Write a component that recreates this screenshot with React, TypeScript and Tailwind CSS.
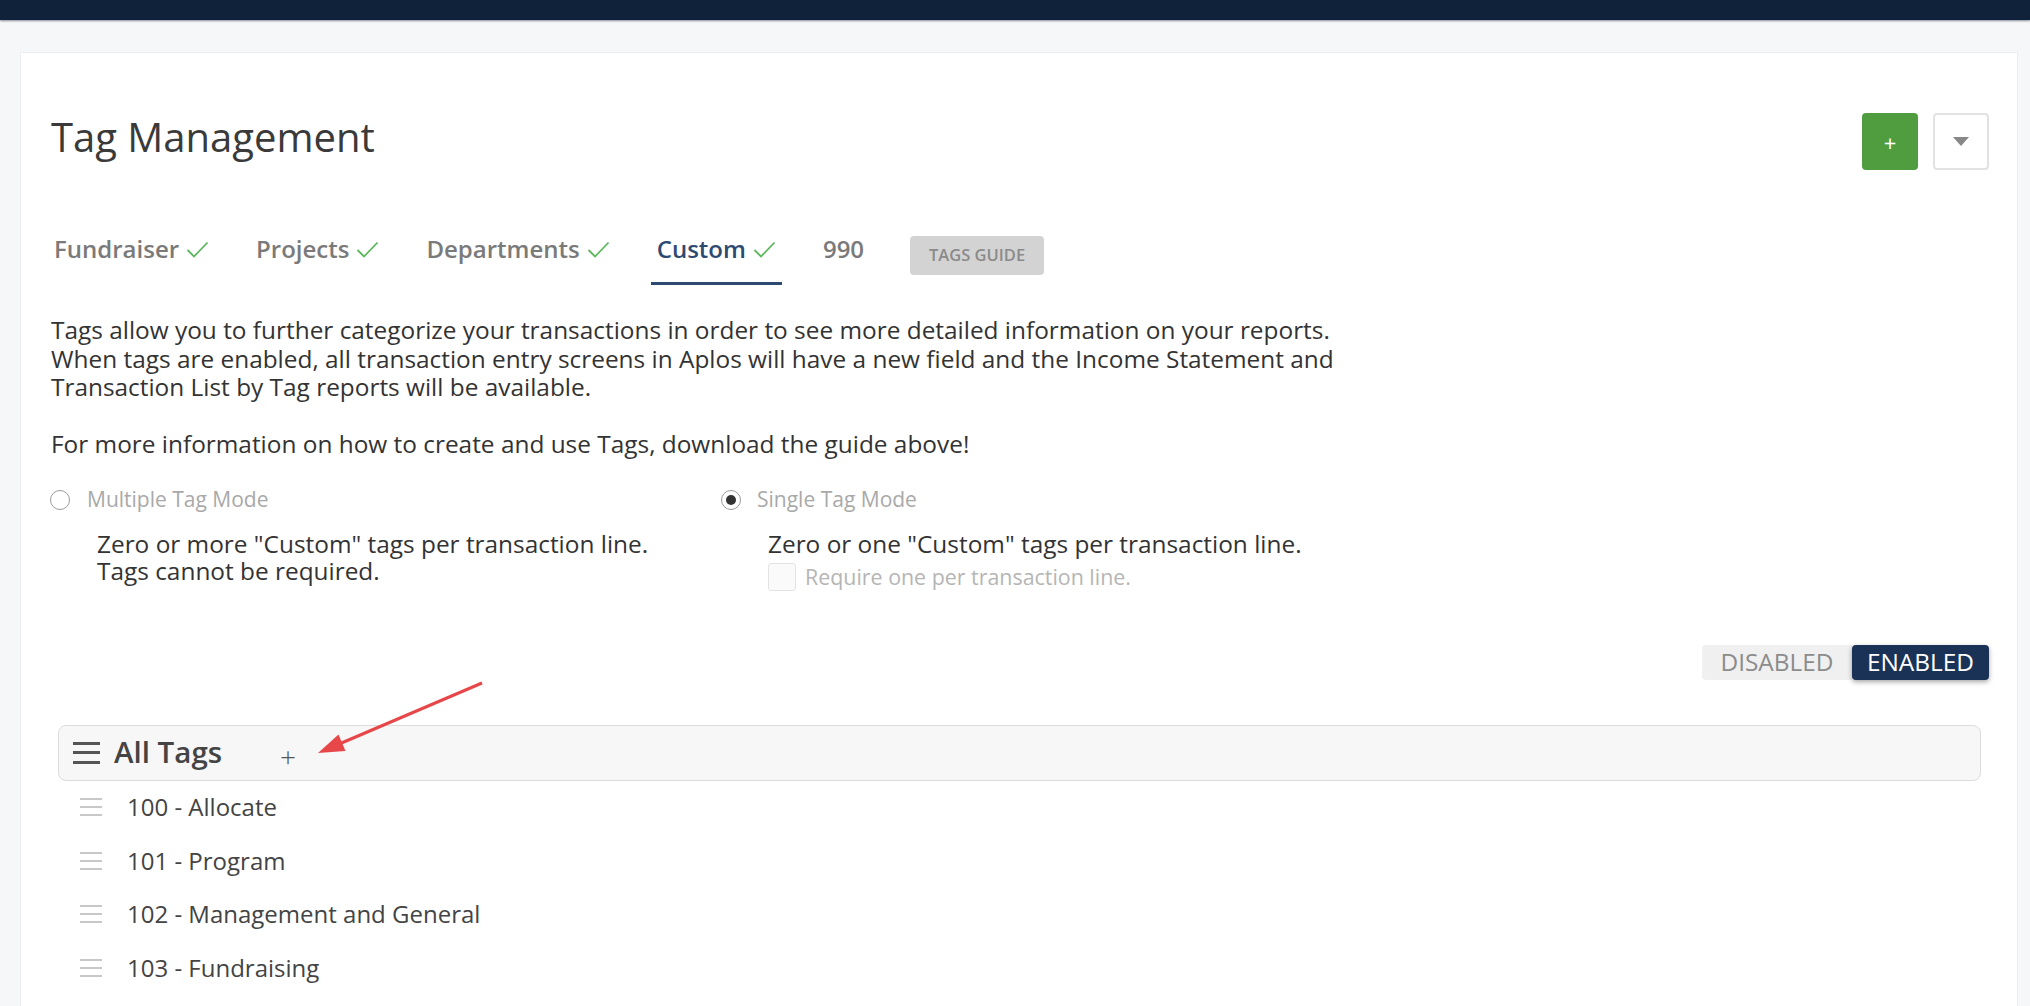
import React from "react";

const Check = () => (
  <svg width="23" height="19" viewBox="0 0 23 19" className="ml-[7px] shrink-0">
    <polyline points="1.5,10 8,16.5 21.5,2.5" fill="none" stroke="#5cb85c" strokeWidth="1.8" />
  </svg>
);

const Burger = ({ big }: { big?: boolean }) =>
  big ? (
    <div className="flex flex-col justify-between w-[27px] h-[22px] shrink-0">
      <div className="h-[3px] bg-[#555]" />
      <div className="h-[3px] bg-[#555]" />
      <div className="h-[3px] bg-[#555]" />
    </div>
  ) : (
    <div className="flex flex-col justify-between w-[22px] h-[18px] shrink-0">
      <div className="h-[2px] bg-[#c8c8c8]" />
      <div className="h-[2px] bg-[#c8c8c8]" />
      <div className="h-[2px] bg-[#c8c8c8]" />
    </div>
  );

const Tab = ({ label, active, check }: { label: string; active?: boolean; check?: boolean }) => (
  <div
    className={`flex items-center px-[6px] pb-[17px] border-b-[3px] ${
      active ? "border-[#2d4a72] text-[#2d4a72]" : "border-transparent text-[#7a7a7a]"
    }`}
  >
    <span className="text-[24px] leading-[32px] font-semibold">{label}</span>
    {check && <Check />}
  </div>
);

export default function App() {
  const tags = ["100 - Allocate", "101 - Program", "102 - Management and General", "103 - Fundraising", "104 - Other"];
  return (
    <div
      className="relative h-screen overflow-hidden bg-[#f6f7f9]"
      style={{ fontFamily: '"Open Sans", "Liberation Sans", sans-serif' }}
    >
      <div className="h-[20px] bg-[#10213a] shadow-[0_1px_2px_rgba(16,33,58,0.5)]" />
      <div className="pt-[32px] pl-[20px] pr-[12px]">
        <div className="bg-white border border-[#eceef1] pt-[60px] pl-[29px] pr-[28px] min-h-[1200px]">
          {/* Header */}
          <div className="flex justify-between items-start">
            <h1 className="text-[40px] leading-[48px] font-normal text-[#3a3a3a] ml-[1px]">Tag Management</h1>
            <div className="flex gap-[15px]">
              <button className="w-[56px] h-[57px] rounded-[4px] bg-[#4f9d3f] text-white text-[22px] leading-none flex items-center justify-center">
                +
              </button>
              <button className="w-[56px] h-[57px] rounded-[4px] border-2 border-[#e2e2e2] bg-white flex items-center justify-center">
                <svg width="16" height="9" viewBox="0 0 16 9">
                  <polygon points="0,0 16,0 8,9" fill="#888" />
                </svg>
              </button>
            </div>
          </div>

          {/* Tabs */}
          <div className="mt-[63px] flex items-start gap-[35px] -ml-[2px]">
            <Tab label="Fundraiser" check />
            <Tab label="Projects" check />
            <Tab label="Departments" check />
            <Tab label="Custom" check active />
            <Tab label="990" />
            <div className="mt-[3px] ml-[5px] w-[134px] h-[39px] rounded-[4px] bg-[#d3d3d3] text-[#8a8a8a] text-[16.5px] font-semibold flex items-center justify-center">
              TAGS GUIDE
            </div>
          </div>

          {/* Description */}
          <div className="mt-[31px] text-[24.4px] leading-[28.5px] text-[#333] whitespace-nowrap ml-[1px]">
            <p>
              Tags allow you to further categorize your transactions in order to see more detailed information on your reports.
              <br />
              When tags are enabled, all transaction entry screens in Aplos will have a new field and the Income Statement and
              <br />
              Transaction List by Tag reports will be available.
            </p>
            <p className="mt-[28.5px]">For more information on how to create and use Tags, download the guide above!</p>
          </div>

          {/* Modes */}
          <div className="mt-[29px] flex w-[1342px]">
            <div className="w-[671px]">
              <div className="flex items-center h-[24px]">
                <span className="w-[20px] h-[20px] rounded-full border border-[#9a9a9a] bg-white shrink-0" />
                <span className="ml-[17px] text-[21px] text-[#a9a9a9]">Multiple Tag Mode</span>
              </div>
              <div className="ml-[47px] mt-[18px] text-[24.4px] leading-[27px] text-[#333]">
                Zero or more "Custom" tags per transaction line.
                <br />
                Tags cannot be required.
              </div>
            </div>
            <div className="w-[671px]">
              <div className="flex items-center h-[24px]">
                <span className="w-[20px] h-[20px] rounded-full border border-[#9a9a9a] bg-white shrink-0 flex items-center justify-center">
                  <span className="w-[10px] h-[10px] rounded-full bg-[#333]" />
                </span>
                <span className="ml-[16px] text-[21px] text-[#a9a9a9]">Single Tag Mode</span>
              </div>
              <div className="ml-[47px] mt-[18px] text-[24.4px] leading-[27px] text-[#333]">
                Zero or one "Custom" tags per transaction line.
              </div>
              <div className="ml-[47px] mt-[4px] flex items-center">
                <span className="w-[28px] h-[28px] rounded-[3px] border border-[#e3e3e3] bg-[#fafafa] shrink-0" />
                <span className="ml-[9px] text-[21.4px] text-[#b5b5b5]">Require one per transaction line.</span>
              </div>
            </div>
          </div>

          {/* Toggle */}
          <div className="mt-[52px] flex justify-end">
            <div className="flex h-[35px]">
              <div className="w-[150px] bg-[#f0f0f0] rounded-l-[4px] text-[24.4px] text-[#8c8c8c] flex items-center justify-center">
                DISABLED
              </div>
              <div className="w-[137px] bg-[#1b3257] rounded-[4px] text-[24.4px] text-white flex items-center justify-center shadow-[0_2px_5px_rgba(0,0,0,0.35)]">
                ENABLED
              </div>
            </div>
          </div>

          {/* All Tags */}
          <div className="mt-[45px] mx-[8px] h-[56px] border border-[#dcdcdc] rounded-[8px] bg-[#f7f7f7] flex items-center pl-[14px]">
            <Burger big />
            <span className="ml-[14px] text-[29.5px] font-semibold text-[#444]">All Tags</span>
            <span className="ml-[58px] mt-[6px] text-[28px] text-[#555] font-light">+</span>
          </div>

          <div className="pl-[30px]">
            {tags.map((t) => (
              <div key={t} className="h-[53.5px] flex items-center">
                <Burger />
                <span className="ml-[25px] text-[24px] text-[#444]">{t}</span>
              </div>
            ))}
          </div>
        </div>
      </div>

      {/* annotation arrow */}
      <svg className="absolute left-0 top-0 pointer-events-none" width="2030" height="1006">
        <line x1="482" y1="683" x2="338" y2="744.5" stroke="#e8474a" strokeWidth="3" />
        <polygon points="318,753 338.5,734.5 345.5,751.1" fill="#e8474a" />
      </svg>
    </div>
  );
}
